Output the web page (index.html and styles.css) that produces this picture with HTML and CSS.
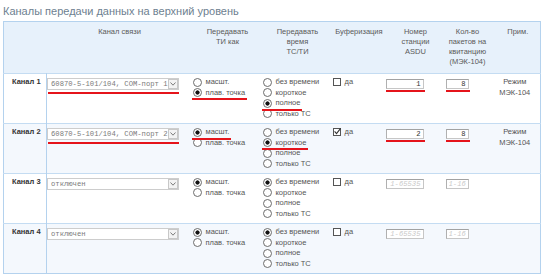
FILE: index.html
```html
<!DOCTYPE html>
<html lang="ru">
<head>
    <meta charset="UTF-8">
    <meta name="viewport" content="width=device-width, initial-scale=1.0">
    <title>Каналы передачи данных на верхний уровень</title>
    <link rel="stylesheet" href="styles.css">
</head>
<body>
    <h1 class="title">Каналы передачи данных на верхний уровень</h1>

    <table class="channels">
        <colgroup>
            <col class="c-name"><col class="c-link"><col class="c-ti"><col class="c-time">
            <col class="c-buf"><col class="c-asdu"><col class="c-pkt"><col class="c-note">
        </colgroup>
        <thead>
            <tr>
                <th></th>
                <th>Канал связи</th>
                <th>Передавать<br>ТИ как</th>
                <th>Передавать<br>время<br>ТС/ТИ</th>
                <th>Буферизация</th>
                <th>Номер<br>станции<br>ASDU</th>
                <th>Кол-во<br>пакетов на<br>квитанцию<br>(МЭК-104)</th>
                <th class="note">Прим.</th>
            </tr>
        </thead>
        <tbody>
            <!-- Канал 1 -->
            <tr>
                <th class="name">Канал 1</th>
                <td class="link">
                    <div class="select mark">
                        <select><option>60870-5-101/104, COM-порт 1</option></select>
                        <span class="arrow"><svg width="6" height="4" viewBox="0 0 6 4"><polyline points="0.5,0.5 3,3.2 5.5,0.5" fill="none" stroke="#7a7a7a" stroke-width="1"/></svg></span>
                    </div>
                </td>
                <td class="ti">
                    <div class="opts">
                        <label class="opt"><input type="radio" name="ti1">масшт.</label>
                        <label class="opt mark"><input type="radio" name="ti1" checked>плав. точка</label>
                    </div>
                </td>
                <td class="time">
                    <div class="opts">
                        <label class="opt"><input type="radio" name="tm1">без времени</label>
                        <label class="opt"><input type="radio" name="tm1">короткое</label>
                        <label class="opt mark"><input type="radio" name="tm1" checked>полное</label>
                        <label class="opt"><input type="radio" name="tm1">только ТС</label>
                    </div>
                </td>
                <td class="buf">
                    <label class="opt"><span class="box"></span>да</label>
                </td>
                <td class="asdu"><div class="field mark"><input class="num wide" value="1"></div></td>
                <td class="pkt"><div class="field mark"><input class="num" value="8"></div></td>
                <td class="note">Режим<br>МЭК-104</td>
            </tr>

            <!-- Канал 2 -->
            <tr>
                <th class="name">Канал 2</th>
                <td class="link">
                    <div class="select mark">
                        <select><option>60870-5-101/104, COM-порт 2</option></select>
                        <span class="arrow"><svg width="6" height="4" viewBox="0 0 6 4"><polyline points="0.5,0.5 3,3.2 5.5,0.5" fill="none" stroke="#7a7a7a" stroke-width="1"/></svg></span>
                    </div>
                </td>
                <td class="ti">
                    <div class="opts">
                        <label class="opt mark"><input type="radio" name="ti2" checked>масшт.</label>
                        <label class="opt"><input type="radio" name="ti2">плав. точка</label>
                    </div>
                </td>
                <td class="time">
                    <div class="opts">
                        <label class="opt"><input type="radio" name="tm2">без времени</label>
                        <label class="opt mark"><input type="radio" name="tm2" checked>короткое</label>
                        <label class="opt"><input type="radio" name="tm2">полное</label>
                        <label class="opt"><input type="radio" name="tm2">только ТС</label>
                    </div>
                </td>
                <td class="buf">
                    <label class="opt"><span class="box"><svg width="9" height="9" viewBox="0 0 9 9"><polyline points="1.6,4.4 3.5,6.6 7.6,1.4" fill="none" stroke="#333" stroke-width="1.1"/></svg></span>да</label>
                </td>
                <td class="asdu"><div class="field mark"><input class="num wide" value="2"></div></td>
                <td class="pkt"><div class="field mark"><input class="num" value="8"></div></td>
                <td class="note">Режим<br>МЭК-104</td>
            </tr>

            <!-- Канал 3 -->
            <tr>
                <th class="name">Канал 3</th>
                <td class="link">
                    <div class="select">
                        <select><option>отключен</option></select>
                        <span class="arrow"><svg width="6" height="4" viewBox="0 0 6 4"><polyline points="0.5,0.5 3,3.2 5.5,0.5" fill="none" stroke="#7a7a7a" stroke-width="1"/></svg></span>
                    </div>
                </td>
                <td class="ti">
                    <div class="opts">
                        <label class="opt"><input type="radio" name="ti3" checked>масшт.</label>
                        <label class="opt"><input type="radio" name="ti3">плав. точка</label>
                    </div>
                </td>
                <td class="time">
                    <div class="opts">
                        <label class="opt"><input type="radio" name="tm3" checked>без времени</label>
                        <label class="opt"><input type="radio" name="tm3">короткое</label>
                        <label class="opt"><input type="radio" name="tm3">полное</label>
                        <label class="opt"><input type="radio" name="tm3">только ТС</label>
                    </div>
                </td>
                <td class="buf">
                    <label class="opt"><span class="box"></span>да</label>
                </td>
                <td class="asdu"><div class="field"><input class="num wide" placeholder="1-65535" disabled></div></td>
                <td class="pkt"><div class="field"><input class="num" placeholder="1-16" disabled></div></td>
                <td class="note"></td>
            </tr>

            <!-- Канал 4 -->
            <tr>
                <th class="name">Канал 4</th>
                <td class="link">
                    <div class="select">
                        <select><option>отключен</option></select>
                        <span class="arrow"><svg width="6" height="4" viewBox="0 0 6 4"><polyline points="0.5,0.5 3,3.2 5.5,0.5" fill="none" stroke="#7a7a7a" stroke-width="1"/></svg></span>
                    </div>
                </td>
                <td class="ti">
                    <div class="opts">
                        <label class="opt"><input type="radio" name="ti4" checked>масшт.</label>
                        <label class="opt"><input type="radio" name="ti4">плав. точка</label>
                    </div>
                </td>
                <td class="time">
                    <div class="opts">
                        <label class="opt"><input type="radio" name="tm4" checked>без времени</label>
                        <label class="opt"><input type="radio" name="tm4">короткое</label>
                        <label class="opt"><input type="radio" name="tm4">полное</label>
                        <label class="opt"><input type="radio" name="tm4">только ТС</label>
                    </div>
                </td>
                <td class="buf">
                    <label class="opt"><span class="box"></span>да</label>
                </td>
                <td class="asdu"><div class="field"><input class="num wide" placeholder="1-65535" disabled></div></td>
                <td class="pkt"><div class="field"><input class="num" placeholder="1-16" disabled></div></td>
                <td class="note"></td>
            </tr>
        </tbody>
    </table>
</body>
</html>
```

FILE: styles.css
```css
body {
    margin: 0;
    padding: 3px;
    font-family: "Liberation Sans", Arial, sans-serif;
    background: #fff;
}

.title {
    margin: 2px 0 3px;
    font-size: 11px;
    line-height: 13px;
    font-weight: normal;
    color: #6e7f90;
}

/* таблица каналов */
.channels {
    width: 537px;
    border-collapse: collapse;
    table-layout: fixed;
    border: 1px solid #b4d2ee;
    font-size: 7.5px;
    color: #555;
}

.c-name { width: 43px; }
.c-link { width: 146px; }
.c-ti { width: 70px; }
.c-time { width: 70px; }
.c-buf { width: 53px; }
.c-asdu { width: 60px; }
.c-pkt { width: 44px; }
.c-note { width: 51px; }

.channels thead th {
    background: #e7f1fb;
    padding: 5px 2px 6px;
    vertical-align: top;
    font-weight: normal;
    line-height: 10px;
    text-align: center;
    color: #5a5a5a;
}

.channels thead th.note {
    padding-left: 8px;
}

.channels tbody tr {
    border-top: 1px solid #c4dcf2;
}

.channels tbody tr:nth-child(even) {
    background: #f4f8fd;
}

.channels tbody th.name {
    padding: 3px 0 4px 8px;
    border-right: 1px solid #b4d2ee;
    text-align: left;
    vertical-align: top;
    line-height: 10.5px;
    font-weight: bold;
    color: #333;
}

.channels tbody td {
    padding: 3px 0 4px;
    vertical-align: top;
    line-height: 10.5px;
}

td.link { padding-left: 8px; }
td.ti { padding-left: 8px; }
td.time { padding-left: 6px; }
td.buf { padding-left: 7px; }
td.asdu { padding-left: 14px; }
td.pkt { padding-left: 7px; }
td.note {
    padding-left: 8px;
    text-align: center;
}

/* выпадающий список */
.select {
    position: relative;
    width: 132px;
    height: 12px;
    margin-top: 1px;
}

.select select {
    appearance: none;
    display: block;
    width: 100%;
    height: 12px;
    margin: 0;
    padding: 0 10px 0 3px;
    box-sizing: border-box;
    border: 1px solid #cdcdcd;
    border-radius: 0;
    background: #fff;
    font-family: "Liberation Mono", monospace;
    font-size: 7.2px;
    color: #7a7a7a;
    outline: none;
}

.select .arrow {
    position: absolute;
    top: 1px;
    right: 1px;
    width: 10px;
    height: 10px;
    box-sizing: border-box;
    border: 1px solid #c8c8c8;
    background: #f3f3f3;
    display: flex;
    align-items: center;
    justify-content: center;
    pointer-events: none;
}

/* переключатели */
.opts {
    display: flex;
    flex-direction: column;
    align-items: flex-start;
}

.opt {
    display: inline-flex;
    align-items: center;
    gap: 4px;
    height: 10.5px;
    white-space: nowrap;
    color: #555;
}

.opt input {
    appearance: none;
    flex: none;
    width: 9px;
    height: 9px;
    box-sizing: border-box;
    margin: 0;
    border: 1px solid #6c6c6c;
    border-radius: 50%;
    background: #fff;
}

.opt input:checked {
    background: radial-gradient(circle, #111 0 1.8px, #fff 2.4px);
}

.box {
    position: relative;
    flex: none;
    width: 8px;
    height: 8px;
    box-sizing: border-box;
    border: 1px solid #555;
    background: #fff;
}

.box svg {
    position: absolute;
    left: -1px;
    top: -2px;
}

/* числовые поля */
.field {
    width: fit-content;
    margin-top: 2px;
}

.num {
    display: block;
    width: 23px;
    height: 10px;
    box-sizing: border-box;
    margin: 0;
    padding: 0 2px;
    border: 1px solid #c6c6c6;
    border-top-color: #a2a2a2;
    border-left-color: #b0b0b0;
    background: #fff;
    font-family: "Liberation Mono", monospace;
    font-size: 7.2px;
    text-align: right;
    color: #333;
    outline: none;
}

.num.wide {
    width: 38px;
}

.num::placeholder {
    color: #c9c9c9;
    font-style: italic;
}

/* красные пометки */
.mark {
    position: relative;
}

.mark::after {
    content: '';
    position: absolute;
    left: -1px;
    right: -2px;
    bottom: -2px;
    height: 2px;
    background: #e5141b;
}

.select.mark::after {
    left: 1px;
    right: 0;
    bottom: -4px;
}

.field.mark::after {
    left: 0;
    right: -1px;
    bottom: -3px;
}
```
